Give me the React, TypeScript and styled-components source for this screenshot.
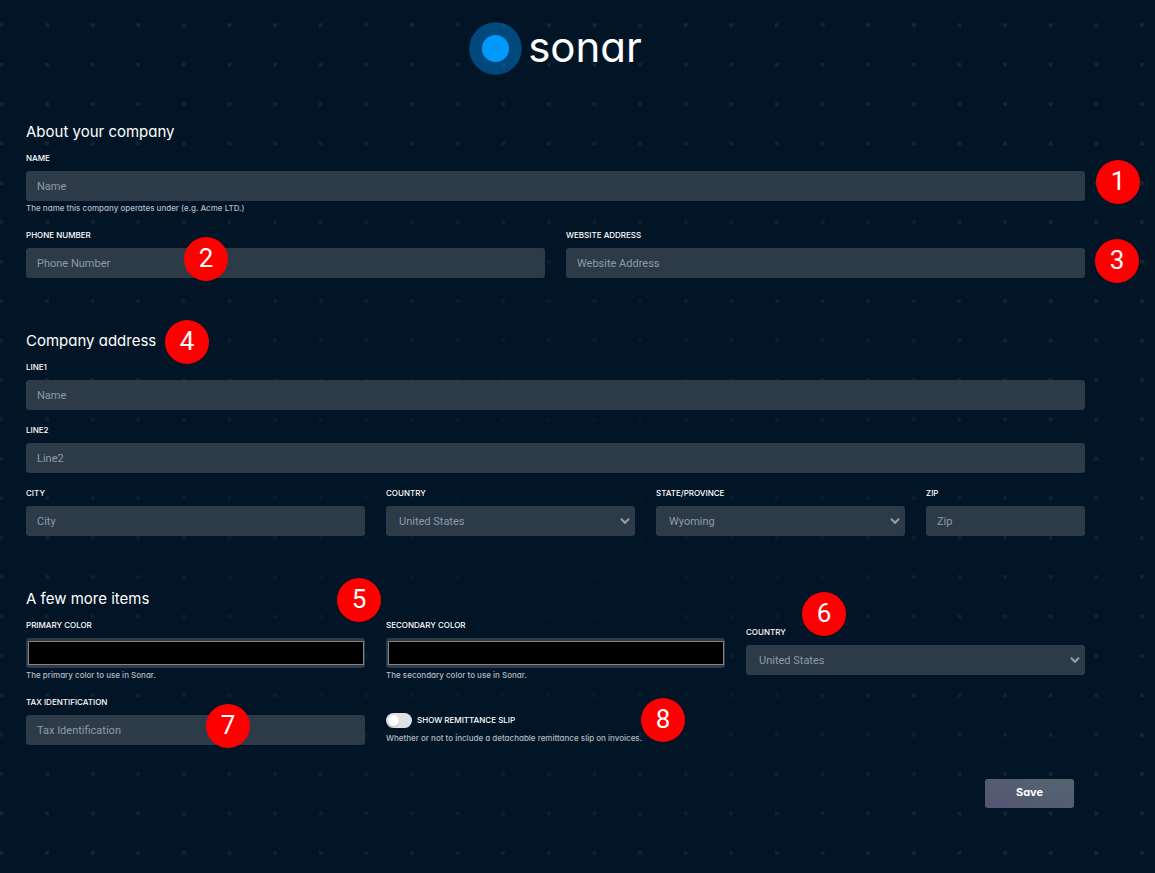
import React, { useId, useState } from "react";
import styled, { createGlobalStyle } from "styled-components";

const sans = `Inter, "Liberation Sans", Arial, sans-serif`;
const controlFont = `Roboto, "Liberation Sans", Arial, sans-serif`;

const GlobalStyle = createGlobalStyle`
  *, *::before, *::after { box-sizing: border-box; }
  body {
    margin: 0;
    background: #021526;
    color: #ffffff;
    font-family: ${sans};
    font-feature-settings: "cv11";
  }
`;

const Page = styled.div`
  position: relative;
  min-height: 100vh;
  padding: 22px 70px 64px 26px;
`;

const Backdrop = styled.svg`
  position: absolute;
  inset: 0;
  width: 100%;
  height: 100%;
`;

const Header = styled.header`
  position: relative;
  display: flex;
  justify-content: center;
  align-items: center;
  gap: 6px;
  height: 52px;
  margin-bottom: 46px;
`;

const LogoMark = styled.svg`
  width: 53px;
  height: 53px;
`;

const LogoName = styled.span`
  padding-bottom: 2px;
  font-size: 42px;
  line-height: 50px;
  font-weight: 400;
`;

const Form = styled.form`
  position: relative;
  display: flex;
  flex-direction: column;
  gap: 51px;
`;

const Section = styled.section`
  display: flex;
  flex-direction: column;
  gap: 8px;
`;

const Heading = styled.h2`
  position: relative;
  margin: 0;
  font-size: 15px;
  line-height: 24px;
  font-weight: 400;
`;

const Grid = styled.div`
  display: grid;
  grid-template-columns: repeat(12, minmax(0, 1fr));
  gap: 14px 21px;
`;

const FieldBox = styled.div<{ $span: number; $align?: string }>`
  position: relative;
  grid-column: span ${(p) => p.$span};
  align-self: ${(p) => p.$align ?? "start"};
  display: flex;
  flex-direction: column;
`;

const Label = styled.label`
  margin-bottom: 7px;
  font-size: 8px;
  line-height: 12px;
  font-weight: 500;
  text-transform: uppercase;
`;

const Help = styled.p`
  margin: 0;
  font-size: 8px;
  line-height: 14px;
  font-weight: 500;
  color: #b3bbc3;
`;

const TextInput = styled.input`
  width: 100%;
  height: 30px;
  padding: 0 11px;
  border: 0;
  border-radius: 3px;
  background: #2d3a47;
  color: #ffffff;
  font-family: ${controlFont};
  font-size: 11px;
  &::placeholder { color: #8f9bab; opacity: 1; }
`;

const ColorInput = styled.input`
  width: 100%;
  height: 30px;
  padding: 0;
  border: 0;
  border-radius: 3px;
  background: #2d3a47;
  &::-webkit-color-swatch-wrapper { padding: 3px 1px 3px 2px; }
  &::-webkit-color-swatch { border: 1px solid #858585; border-radius: 0; }
`;

const SelectWrap = styled.div`
  position: relative;
`;

const SelectInput = styled.select`
  display: block;
  width: 100%;
  height: 30px;
  padding: 0 24px 0 13px;
  border: 0;
  border-radius: 3px;
  appearance: none;
  background: #2d3a47;
  color: #8f9bab;
  font-family: ${controlFont};
  font-size: 11px;
`;

const Chevron = styled.svg`
  position: absolute;
  right: 5px;
  top: 11px;
  width: 10px;
  height: 8px;
  pointer-events: none;
`;

const SwitchLabel = styled.label`
  display: flex;
  align-items: center;
  gap: 5px;
  margin-bottom: 3px;
  font-size: 8px;
  line-height: 15px;
  font-weight: 500;
  text-transform: uppercase;
`;

const Switch = styled.input`
  appearance: none;
  width: 26px;
  height: 15px;
  margin: 0;
  padding: 2px;
  border-radius: 8px;
  background: #dee2e7;
  &::before {
    content: "";
    display: block;
    width: 11px;
    height: 11px;
    border-radius: 50%;
    background: #ffffff;
    box-shadow: 0 1px 2px rgba(0, 0, 0, 0.2);
  }
  &:checked { background: #0099ff; }
  &:checked::before { margin-left: 11px; }
`;

const Actions = styled.div`
  position: relative;
  display: flex;
  justify-content: flex-end;
  margin-top: 26px;
  padding-right: 11px;
`;

const SaveButton = styled.button`
  width: 89px;
  height: 29px;
  padding: 0 0 3px;
  border: 0;
  border-radius: 3px;
  background: linear-gradient(20deg, #555474, #54666f);
  color: #ffffff;
  font-family: ${sans};
  font-feature-settings: "cv11";
  font-size: 11px;
  font-weight: 700;
`;

const Badge = styled.span<{ $top: number; $left?: number; $right?: number }>`
  position: absolute;
  z-index: 1;
  top: ${(p) => p.$top}px;
  ${(p) => (p.$left !== undefined ? `left: ${p.$left}px;` : "")}
  ${(p) => (p.$right !== undefined ? `right: ${p.$right}px;` : "")}
  width: 44px;
  height: 44px;
  border-radius: 50%;
  background: #ff0000;
  color: #ffffff;
  font-family: Roboto, Arial, sans-serif;
  font-size: 26px;
  line-height: 42px;
  font-weight: 400;
  text-align: center;
`;

type FieldProps = {
  label: string;
  span: number;
  align?: string;
  help?: string;
  badge?: React.ReactNode;
};

function TextField({ label, span, placeholder, help, badge }: FieldProps & { placeholder?: string }) {
  const id = useId();
  return (
    <FieldBox $span={span}>
      <Label htmlFor={id}>{label}</Label>
      <TextInput id={id} type="text" placeholder={placeholder ?? label} />
      {help && <Help>{help}</Help>}
      {badge}
    </FieldBox>
  );
}

function ColorField({ label, span, help, badge }: FieldProps) {
  const id = useId();
  return (
    <FieldBox $span={span}>
      <Label htmlFor={id}>{label}</Label>
      <ColorInput id={id} type="color" defaultValue="#000000" />
      {help && <Help>{help}</Help>}
      {badge}
    </FieldBox>
  );
}

function SelectField({ label, span, align, options, badge }: FieldProps & { options: string[] }) {
  const id = useId();
  return (
    <FieldBox $span={span} $align={align}>
      <Label htmlFor={id}>{label}</Label>
      <SelectWrap>
        <SelectInput id={id}>
          {options.map((o) => (
            <option key={o}>{o}</option>
          ))}
        </SelectInput>
        <Chevron viewBox="0 0 10 8" aria-hidden="true">
          <path d="M1 1.8 L5 5.8 L9 1.8" fill="none" stroke="#96a1af" strokeWidth="2" />
        </Chevron>
      </SelectWrap>
      {badge}
    </FieldBox>
  );
}

function DotBackdrop() {
  return (
    <Backdrop aria-hidden="true">
      <defs>
        <pattern id="dots" width="45.62" height="39.41" patternUnits="userSpaceOnUse" x="-21.4" y="5.6">
          <rect x="20.8" y="17.7" width="4" height="4" fill="#ffffff" />
        </pattern>
        <radialGradient id="fade" cx="45%" cy="60%" r="60%">
          <stop offset="0" stopColor="#ffffff" stopOpacity="0.01" />
          <stop offset="1" stopColor="#ffffff" stopOpacity="0.07" />
        </radialGradient>
        <mask id="fadeMask">
          <rect width="100%" height="100%" fill="url(#fade)" />
        </mask>
      </defs>
      <rect width="100%" height="100%" fill="url(#dots)" mask="url(#fadeMask)" />
    </Backdrop>
  );
}

export default function App() {
  const [remit, setRemit] = useState(false);
  return (
    <>
      <GlobalStyle />
      <Page>
        <DotBackdrop />
        <Header>
          <LogoMark viewBox="0 0 53 53" aria-hidden="true">
            <circle cx="26.5" cy="26.5" r="26.3" fill="#0099ff" fillOpacity="0.4" />
            <circle cx="26.5" cy="26.5" r="13.6" fill="#0099ff" />
          </LogoMark>
          <LogoName>sonar</LogoName>
        </Header>
        <Form onSubmit={(e) => e.preventDefault()}>
          <Section>
            <Heading>About your company</Heading>
            <Grid>
              <TextField
                label="Name"
                span={12}
                help="The name this company operates under (e.g. Acme LTD.)"
                badge={<Badge $top={8} $right={-55}>1</Badge>}
              />
              <TextField label="Phone Number" span={6} badge={<Badge $top={8} $left={158}>2</Badge>} />
              <TextField label="Website Address" span={6} badge={<Badge $top={10} $right={-54}>3</Badge>} />
            </Grid>
          </Section>
          <Section>
            <Heading>
              Company address
              <Badge $top={-9} $left={139}>4</Badge>
            </Heading>
            <Grid>
              <TextField label="Line1" span={12} placeholder="Name" />
              <TextField label="Line2" span={12} />
              <TextField label="City" span={4} />
              <SelectField label="Country" span={3} options={["United States"]} />
              <SelectField label="State/Province" span={3} options={["Wyoming"]} />
              <TextField label="Zip" span={2} />
            </Grid>
          </Section>
          <Section>
            <Heading>A few more items</Heading>
            <Grid>
              <ColorField
                label="Primary Color"
                span={4}
                help="The primary color to use in Sonar."
                badge={<Badge $top={-41} $left={311}>5</Badge>}
              />
              <ColorField label="Secondary Color" span={4} help="The secondary color to use in Sonar." />
              <SelectField
                label="Country"
                span={4}
                align="center"
                options={["United States"]}
                badge={<Badge $top={-34} $left={56}>6</Badge>}
              />
              <TextField label="Tax Identification" span={4} badge={<Badge $top={8} $left={180}>7</Badge>} />
              <FieldBox $span={4} $align="end">
                <SwitchLabel>
                  <Switch type="checkbox" checked={remit} onChange={(e) => setRemit(e.target.checked)} />
                  Show remittance slip
                </SwitchLabel>
                <Help>Whether or not to include a detachable remittance slip on invoices.</Help>
                <Badge $top={-15} $left={255}>8</Badge>
              </FieldBox>
            </Grid>
            <Actions>
              <SaveButton type="submit">Save</SaveButton>
            </Actions>
          </Section>
        </Form>
      </Page>
    </>
  );
}
